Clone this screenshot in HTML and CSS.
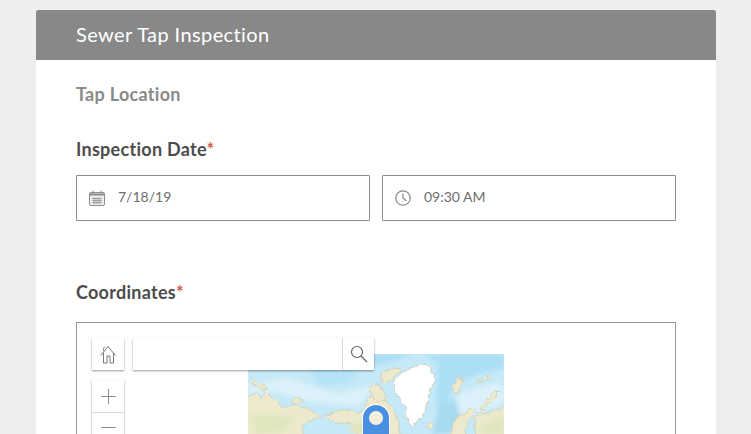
FILE: index.html
```html
<!DOCTYPE html>
<html lang="en">
<head>
<meta charset="utf-8">
<title>Sewer Tap Inspection</title>
<link rel="stylesheet" href="styles.css">
</head>
<body>
<main class="card">
  <header class="card-header">Sewer Tap Inspection</header>
  <div class="card-body">
    <h2 class="group-title">Tap Location</h2>
    <label class="field-label">Inspection Date<span class="req">*</span></label>
    <div class="datetime">
      <div class="input">
        <svg class="ico" width="18" height="18" viewBox="0 0 18 18" fill="none" stroke="#8c8c8c">
          <rect x="1.500" y="3.500" width="15" height="13" rx="1.500" fill="#eee"/>
          <path d="M1.500 5.500h15" stroke-width="2"/>
          <path d="M5 1.500v3M13 1.500v3"/>
          <path d="M4 9.500h10M4 11.500h10M4 13.500h10M6 8.500v6.500M8 8.500v6.500M10 8.500v6.500M12 8.500v6.500" stroke-width=".7"/>
        </svg>
        <span class="value">7/18/19</span>
      </div>
      <div class="input">
        <svg class="ico" width="18" height="18" viewBox="0 0 18 18" fill="none" stroke="#8c8c8c" stroke-width="1.300">
          <circle cx="9" cy="9" r="7.200"/>
          <path d="M9 4.500V9l3.500 3"/>
        </svg>
        <span class="value">09:30 AM</span>
      </div>
    </div>
    <label class="field-label coords">Coordinates<span class="req">*</span></label>
    <div class="map-box">
      <svg class="map" width="256" height="80" viewBox="0 0 256 80">
        <defs>
          <filter id="soft"><feGaussianBlur stdDeviation="2"/></filter>
          <filter id="rough" x="-5%" y="-5%" width="110%" height="110%">
            <feTurbulence type="fractalNoise" baseFrequency=".16" numOctaves="3" seed="4"/>
            <feDisplacementMap in="SourceGraphic" scale="6" xChannelSelector="R" yChannelSelector="G"/>
          </filter>
        </defs>
        <rect width="256" height="80" fill="#c6e9f7"/>
        <g filter="url(#soft)">
          <path d="M0 14 30 8 50 2 100 4 120 14 150 6 165 0 0 -4Z" fill="#acdff6"/>
          <path d="M60 10 90 8 110 18 100 30 70 32Z" fill="#b4e3f7"/>
          <path d="M175 0 256 0 256 14 230 20 205 30 200 50 190 70 188 40 190 10Z" fill="#acdff6"/>
          <path d="M0 30 40 24 90 40 130 30 110 52 60 48 30 38 0 40Z" fill="#dcf1f9"/>
          <path d="M210 40 250 28 256 34 256 50 225 60 210 70Z" fill="#dcf1f9"/>
          <path d="M190 56 206 44 215 70 200 80 184 80Z" fill="#a8daf0"/>
        </g>
        <g filter="url(#rough)" fill="#ece9cc" stroke="#cdcab2" stroke-width=".7">
          <path d="M-4 44 8 40 14 44 18 38 24 44 32 50 36 54 46 50 50 53 60 54 66 58 74 64 62 66 54 72 56 84 -4 84Z"/>
          <path d="M2 24 8 28 14 30 20 35 14 36 9 32 4 30Z"/>
          <path d="M45 45 50 44 56 46 52 49 46 48Z"/>
          <path d="M78 62 84 60 92 56 102 56 112 60 118 50 124 40 132 40 140 48 146 56 150 65 152 76 150 84 112 84 108 72 98 68 86 70Z"/>
          <path d="M122 33 130 30 136 38 139 46 130 48 124 42Z"/>
          <path d="M132 22 138 16 148 13 153 16 146 24 138 30 134 28Z"/>
          <path d="M205 28 210 24 215 26 214 32 209 41 205 36Z"/>
          <path d="M229 26 234 26 237 21 241 22 242 26 236 27 231 28Z"/>
          <path d="M178 70 184 69 187 72 183 74 178 73Z"/>
          <path d="M202 84 204 70 212 62 220 56 228 54 226 60 218 72 216 84Z"/>
          <path d="M228 84 226 66 230 59 240 60 260 52 260 84Z"/>
          <path d="M233 54 238 46 244 40 250 37 247 44 240 50 236 56Z"/>
        </g>
        <path filter="url(#soft)" fill="#dfe6bd" d="M4 60 30 60 44 64 36 78 8 80ZM232 72 256 62 256 80 234 80ZM100 70 130 66 140 80 104 80Z"/>
        <path filter="url(#rough)" fill="#fff" stroke="#c9c6ae" stroke-width=".8" d="M145 28 152 20 165 14 172 10 180 11 186 20 187 26 182 36 180 46 178 58 170 66 164 74 160 68 158 56 152 46 146 36Z"/>
      </svg>
      <div class="widget home">
        <svg width="17" height="19" viewBox="0 0 17 19" fill="none" stroke="#777" stroke-width="1">
          <path d="M.8 10.500 8 1.500l7.500 9M3.500 8v10h3.500v-7h3v7h3.500V8"/>
          <path d="M3.500 6V2.500h1.500" stroke="#999"/>
        </svg>
      </div>
      <div class="widget search">
        <div class="search-field"></div>
        <div class="search-btn">
          <svg width="18" height="18" viewBox="0 0 18 18" fill="none" stroke="#666" stroke-width="1.200">
            <circle cx="7" cy="7" r="5.500"/>
            <path d="m11 11 6 6"/>
          </svg>
        </div>
      </div>
      <div class="widget zoom">
        <div class="zoom-btn">
          <svg width="15" height="15" viewBox="0 0 15 15" stroke="#8a8a8a"><path d="M0 7.500h15M7.500 0v15"/></svg>
        </div>
        <div class="zoom-btn">
          <svg class="minus" width="15" height="15" viewBox="0 0 15 15" stroke="#8a8a8a"><path d="M0 7.500h15"/></svg>
        </div>
      </div>
      <div class="pin"><span class="pin-dot"></span></div>
    </div>
  </div>
</main>
</body>
</html>
```

FILE: styles.css
```css
html, body {
  margin: 0;
  height: 434px;
  overflow: hidden;
  background: #eeeeee;
}
body {
  font-family: Lato, "Open Sans", sans-serif;
  color: #4c4c4c;
}
.card {
  width: 680px;
  margin: 10px 0 0 36px;
  background: #fff;
  border-radius: 2px 2px 0 0;
}
.card-header {
  height: 50px;
  box-sizing: border-box;
  line-height: 48px;
  padding-left: 40px;
  background: #888888;
  color: #fff;
  font-size: 20px;
  letter-spacing: .4px;
  border-radius: 2px 2px 0 0;
}
.card-body {
  padding: 22px 40px 0;
}
.group-title {
  margin: 0;
  font-size: 18px;
  line-height: 24px;
  font-weight: 700;
  letter-spacing: .3px;
  color: #8a8a8a;
}
.field-label {
  display: block;
  margin-top: 31px;
  font-size: 18px;
  line-height: 24px;
  font-weight: 700;
  letter-spacing: .28px;
  color: #4c4c4c;
}
.coords {
  margin-top: 59px;
}
.req {
  color: #cf5f45;
}
.datetime {
  display: flex;
  gap: 12px;
  margin-top: 14px;
}
.input {
  flex: 1;
  box-sizing: border-box;
  height: 46px;
  border: 1px solid #8c8c8c;
  border-radius: 1px;
  display: flex;
  align-items: center;
  padding-left: 11px;
  gap: 12px;
}
.value {
  font-size: 14px;
  line-height: 20px;
  margin-top: -2px;
  color: #6e6e6e;
}
.map-box {
  position: relative;
  box-sizing: border-box;
  height: 200px;
  margin-top: 18px;
  border: 1px solid #999;
}
.map {
  position: absolute;
  left: 171px;
  top: 31px;
}
.widget {
  position: absolute;
  background: #fff;
  box-shadow: 0 1px 2px rgba(0, 0, 0, .4);
}
.home {
  left: 15px;
  top: 15px;
  width: 32px;
  height: 32px;
  display: flex;
  align-items: center;
  justify-content: center;
}
.search {
  left: 56px;
  top: 15px;
  width: 241px;
  height: 32px;
  display: flex;
}
.search-field {
  flex: 1;
}
.search-btn {
  width: 31px;
  border-left: 1px solid #d8d8d8;
  display: flex;
  align-items: center;
  justify-content: center;
}
.zoom {
  left: 15px;
  top: 57px;
  width: 32px;
}
.zoom-btn {
  height: 32px;
  display: flex;
  align-items: center;
  justify-content: center;
  border-bottom: 1px solid #ddd;
}
.minus {
  margin-bottom: 4px;
}
.pin {
  position: absolute;
  left: 286px;
  top: 82px;
  width: 26px;
  height: 40px;
  background: #4a90e2;
  border-radius: 13px 13px 0 0;
  box-shadow: 0 0 0 1px #fff;
  display: flex;
  justify-content: center;
  padding-top: 6px;
}
.pin-dot {
  width: 14px;
  height: 14px;
  border-radius: 50%;
  background: #f2efdc;
}
```
